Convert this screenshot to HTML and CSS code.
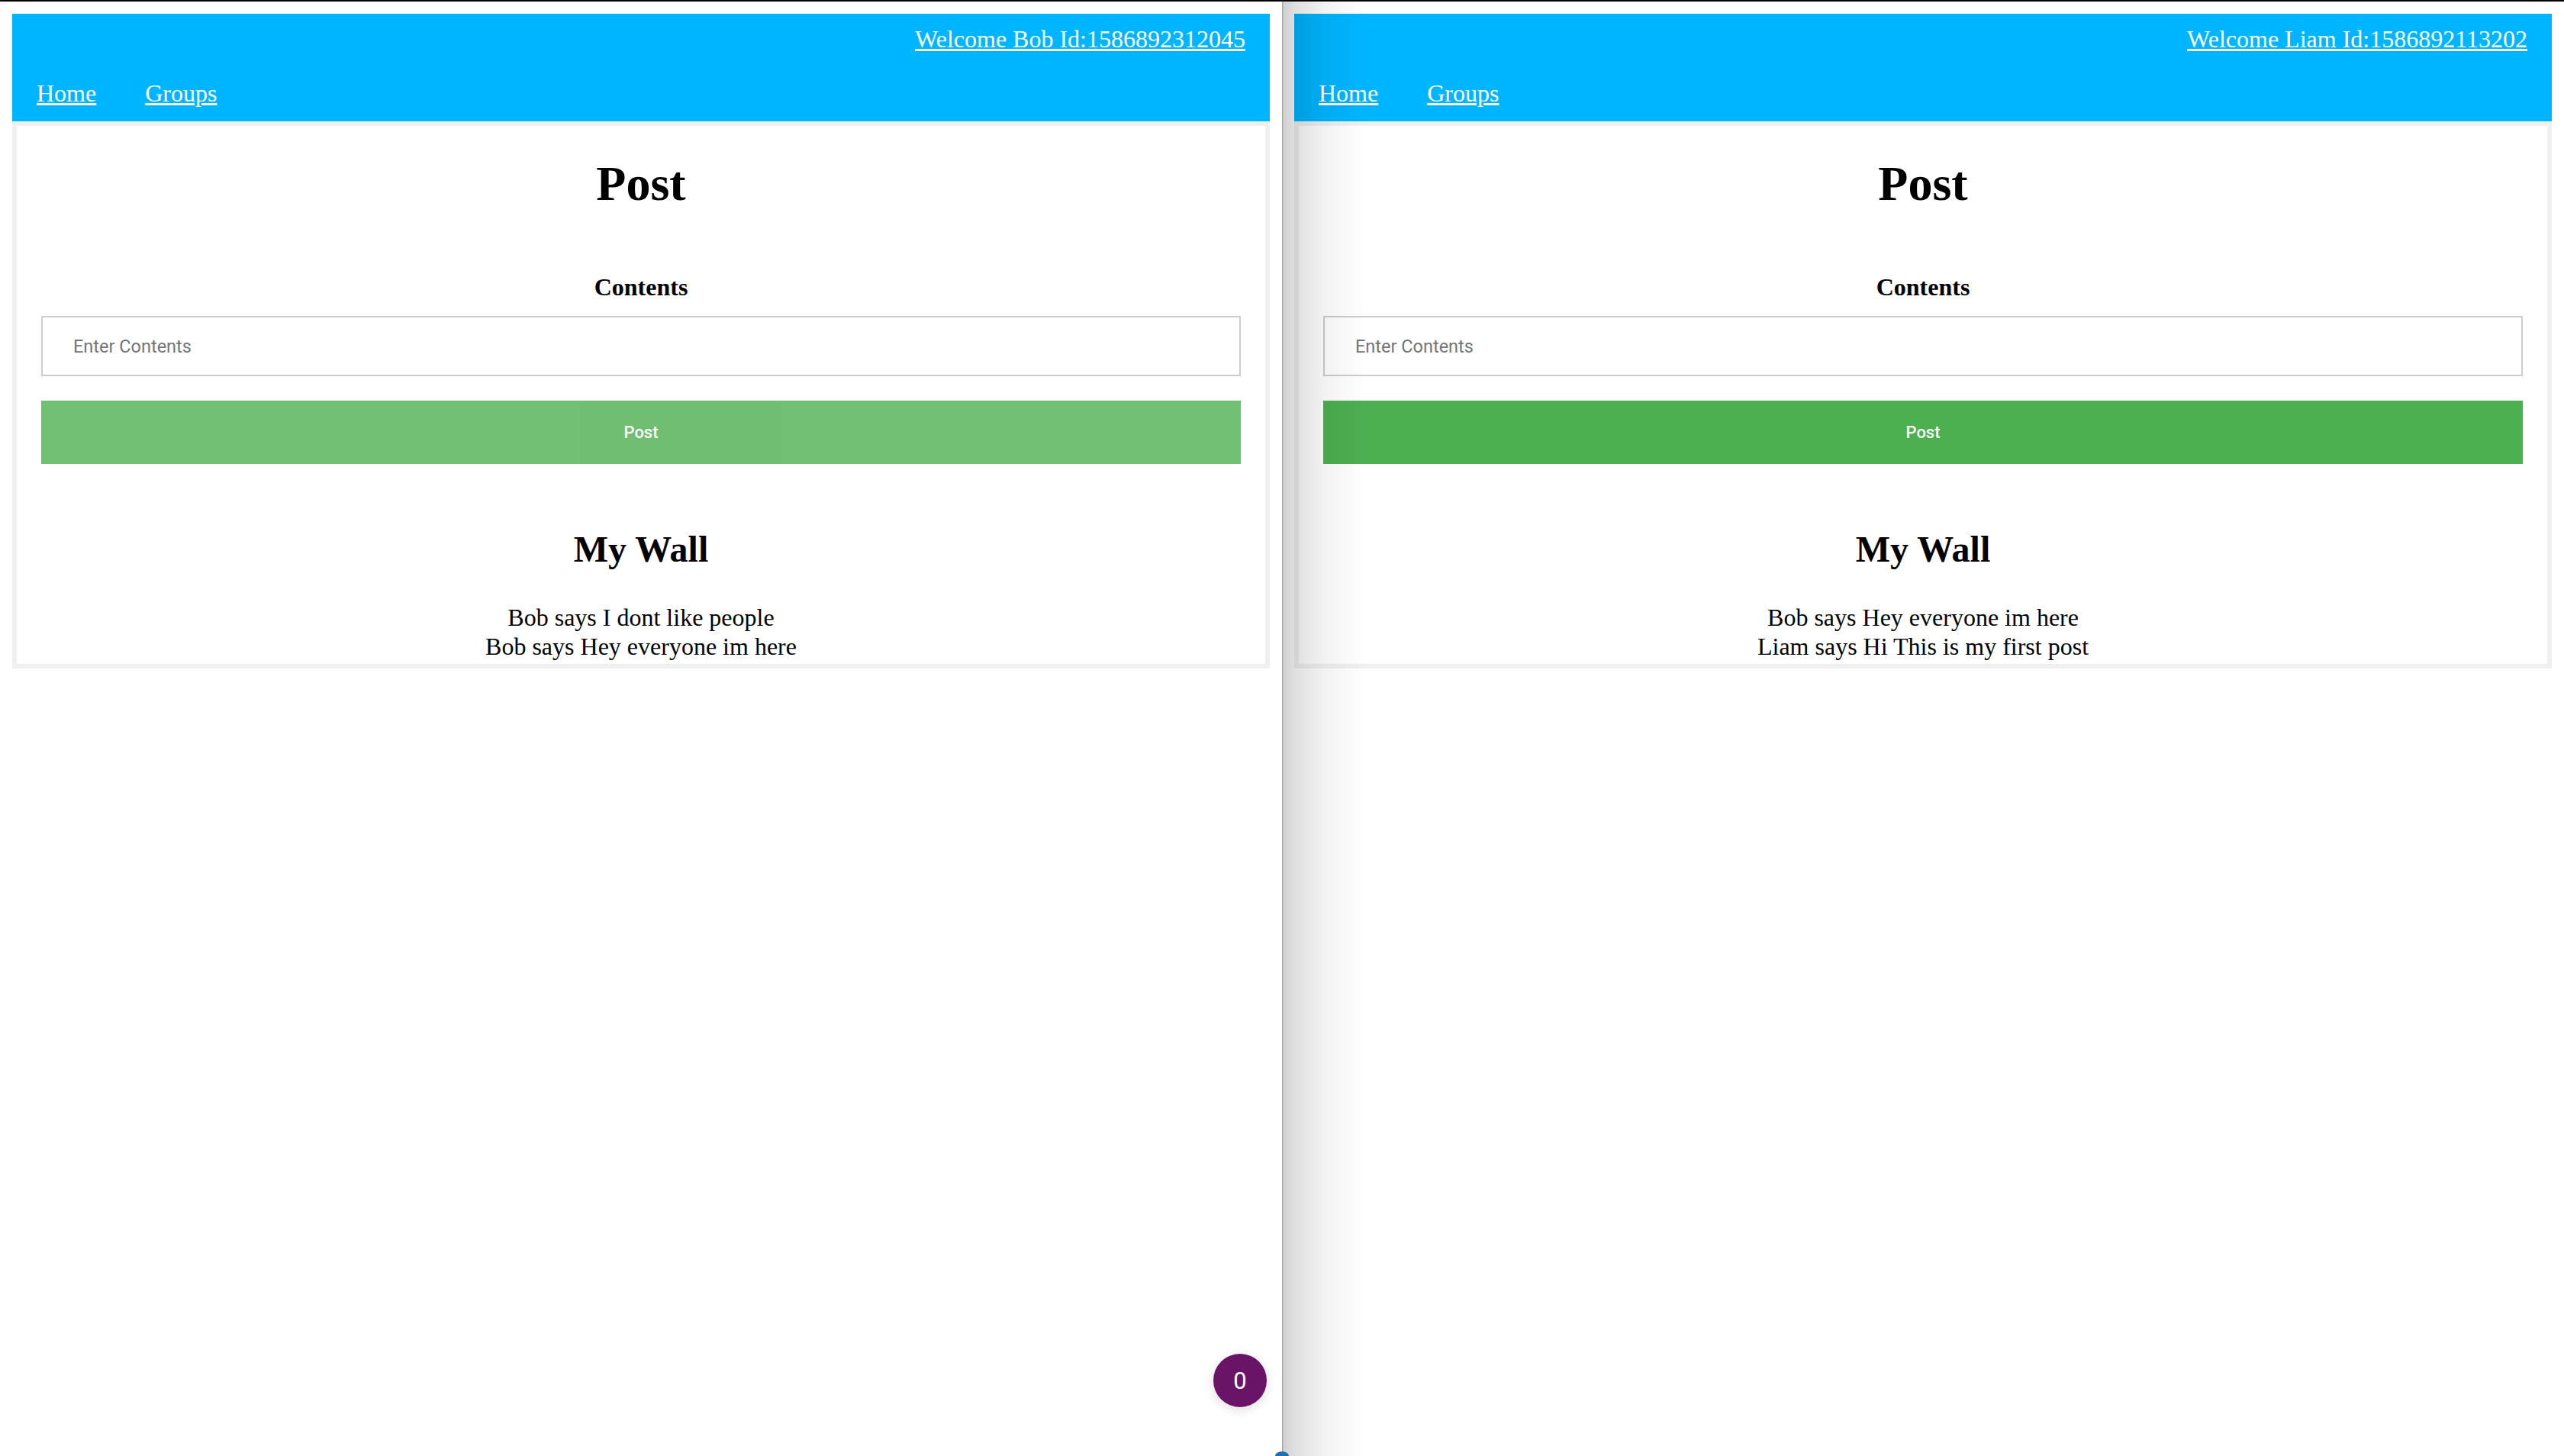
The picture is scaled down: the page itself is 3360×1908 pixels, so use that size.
FILE: index.html
```html
<!DOCTYPE html>
<html lang="en">
<head>
<meta charset="utf-8">
<title>Wall</title>
<link rel="stylesheet" href="styles.css">
</head>
<body>
<div class="topbar"></div>
<div class="desktop">
  <section class="window">
    <header class="appbar">
      <div class="welcome"><a href="#">Welcome Bob Id:1586892312045</a></div>
      <nav class="nav"><a href="#">Home</a><a href="#">Groups</a></nav>
    </header>
    <main class="card">
      <h1 class="title">Post</h1>
      <h4 class="label">Contents</h4>
      <input class="field" type="text" placeholder="Enter Contents">
      <button class="btn btn-disabled" type="button">Post</button>
      <h2 class="wall-title">My Wall</h2>
      <div class="wall">
        <div class="wall-item">Bob says I dont like people</div>
        <div class="wall-item">Bob says Hey everyone im here</div>
      </div>
    </main>
    <div class="badge">0</div>
    <div class="dock-dot"></div>
  </section>
  <section class="window">
    <header class="appbar">
      <div class="welcome"><a href="#">Welcome Liam Id:1586892113202</a></div>
      <nav class="nav"><a href="#">Home</a><a href="#">Groups</a></nav>
    </header>
    <main class="card">
      <h1 class="title">Post</h1>
      <h4 class="label">Contents</h4>
      <input class="field" type="text" placeholder="Enter Contents">
      <button class="btn" type="button">Post</button>
      <h2 class="wall-title">My Wall</h2>
      <div class="wall">
        <div class="wall-item">Bob says Hey everyone im here</div>
        <div class="wall-item">Liam says Hi This is my first post</div>
      </div>
    </main>
    <div class="shade"></div>
  </section>
</div>
</body>
</html>
```
FILE: styles.css
```css
* { box-sizing: border-box; }

html, body {
  margin: 0;
  padding: 0;
  background: #ffffff;
  overflow: hidden;
}

body {
  font-family: "Liberation Serif", "Times New Roman", serif;
  color: #000;
}

.topbar {
  height: 2px;
  background: #000;
}

.desktop {
  display: flex;
  height: 1906px;
}

.window {
  position: relative;
  width: 1680px;
  height: 1906px;
  padding: 16px 16px 0;
  background: #fff;
}

.appbar {
  background: #00b5ff;
  padding: 15px 32px 19px;
  font-size: 32px;
}

.appbar a {
  color: #fff;
  text-decoration: underline;
  font-size: 32px;
}

.welcome {
  text-align: right;
  line-height: 36px;
  height: 36px;
}

.nav {
  display: flex;
  gap: 64px;
  margin-top: 35px;
  line-height: 36px;
  height: 36px;
}

.card {
  border: 6px solid #f0f0f0;
  padding: 0 32px 4px;
  text-align: center;
}

.title {
  margin: 39px 0 0;
  font-size: 64px;
  line-height: 74px;
  font-weight: bold;
}

.label {
  margin: 80px 0 0;
  font-size: 32px;
  line-height: 37px;
  font-weight: bold;
}

.field {
  display: block;
  width: 100%;
  height: 79px;
  margin: 19px 0 0;
  padding: 0 40px;
  border: 2px solid #cccccc;
  border-radius: 0;
  background: #fff;
  font-family: Roboto, "Liberation Sans", sans-serif;
  font-size: 23.5px;
  color: #333;
  outline: none;
}

.field::placeholder {
  color: #757575;
}

.btn {
  display: block;
  width: 100%;
  height: 83px;
  margin: 32px 0 0;
  border: none;
  background: #4caf50;
  color: #fff;
  font-family: Roboto, "Liberation Sans", sans-serif;
  font-size: 22px;
  font-weight: 500;
  cursor: pointer;
}

.btn-disabled {
  opacity: 0.8;
}

.wall-title {
  margin: 84px 0 0;
  font-size: 48px;
  line-height: 55px;
  font-weight: bold;
}

.wall {
  margin-top: 43px;
  font-size: 32px;
  line-height: 38px;
}

.badge {
  position: absolute;
  right: 20px;
  bottom: 64px;
  width: 70px;
  height: 70px;
  border-radius: 50%;
  background: #691466;
  color: #fff;
  font-family: Roboto, "Liberation Sans", sans-serif;
  font-size: 31px;
  display: flex;
  align-items: center;
  justify-content: center;
  box-shadow: 0 3px 14px rgba(0, 0, 0, 0.14);
}

.dock-dot {
  position: absolute;
  right: -9px;
  bottom: -6px;
  width: 18px;
  height: 12px;
  border-radius: 50% 50% 0 0;
  background: #1f6fb2;
  z-index: 2;
}

.shade {
  position: absolute;
  left: 0;
  top: -2px;
  bottom: 0;
  width: 110px;
  pointer-events: none;
  background: linear-gradient(to right,
    rgba(0, 0, 0, 0.42) 0,
    rgba(0, 0, 0, 0.18) 2px,
    rgba(0, 0, 0, 0.12) 18px,
    rgba(0, 0, 0, 0.05) 55px,
    rgba(0, 0, 0, 0) 110px);
}
```
